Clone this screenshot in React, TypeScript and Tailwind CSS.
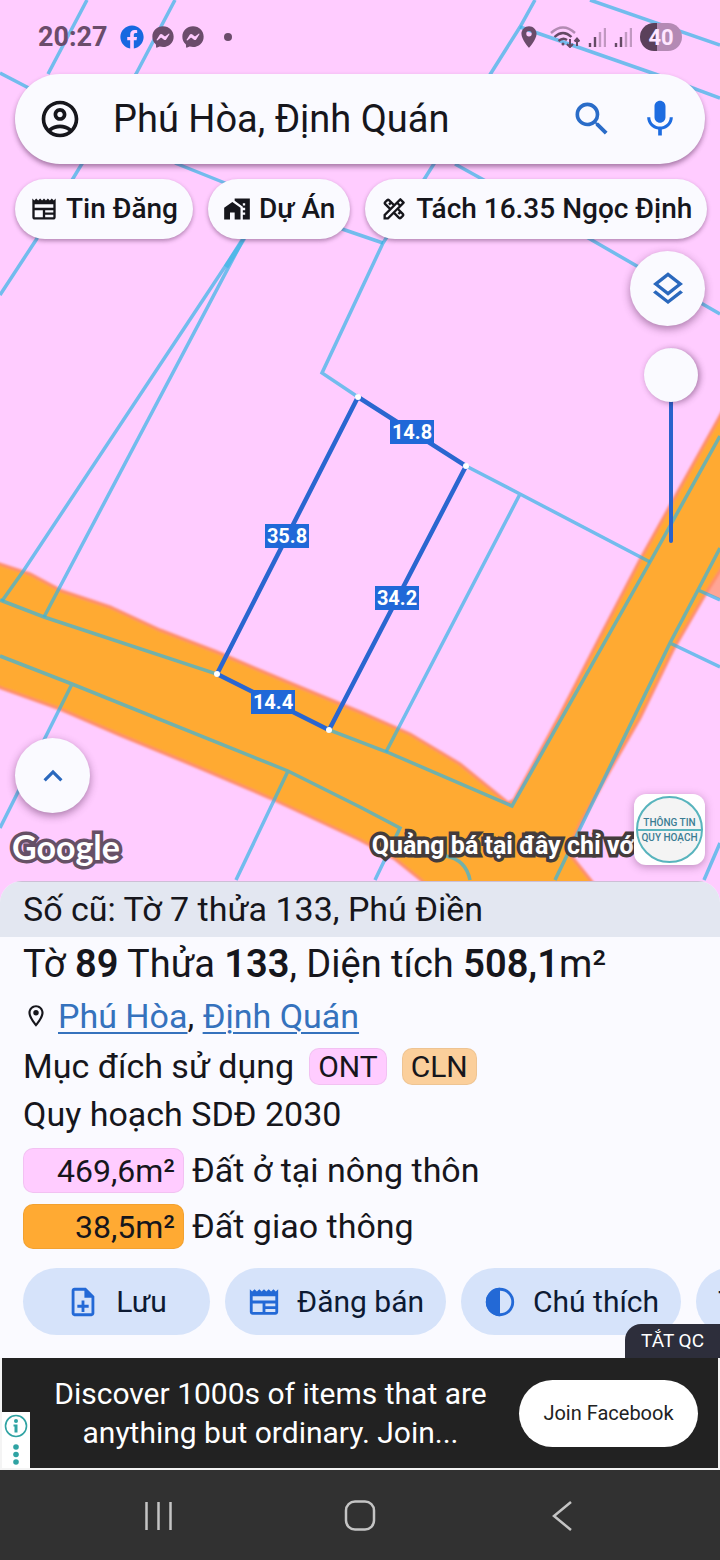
import type { ReactNode } from "react";
import { FaFacebook, FaFacebookMessenger } from "react-icons/fa";
import {
  MdHomeWork,
  MdKeyboardArrowUp,
  MdLocationOn,
  MdMic,
  MdNewspaper,
  MdOutlineAccountCircle,
  MdOutlineDesignServices,
  MdOutlineLayers,
  MdOutlineLocationOn,
  MdOutlineNoteAdd,
  MdSearch,
} from "react-icons/md";

const parcelLines = [
  "M87 0L48 74M0 73L48 98M175 0L136 74L36 240L0 295",
  "M175 163L235 187L345 230L383 243",
  "M535 0L520 27L425 178L383 243L322 373L358 397",
  "M520 27L655 74L720 98M590 0L720 45M455 164L590 239L720 314",
  "M244 238L24 570L2 601M244 238L44 617",
  "M0 600L44 617L217 674L329 730L387 752L512 806L650 562L720 436",
  "M466 466L520 494L650 562M520 494L386 752",
  "M0 656L72 684L288 771L360 807L400 828L375 880M72 684L0 828M288 771L236 880",
  "M446 856Q466 860 470 880",
  "M720 548L698 590L670 643L555 880M698 590L720 600M670 643L720 667M720 843L704 880",
];

const corners = [
  [358, 397],
  [466, 466],
  [329, 730],
  [217, 674],
];

const edges = [
  { x: 412, y: 432, label: "14.8" },
  { x: 287, y: 536, label: "35.8" },
  { x: 397, y: 598, label: "34.2" },
  { x: 273, y: 702, label: "14.4" },
];

const ParcelMap = () => (
  <svg
    className="absolute inset-x-0 top-0 h-[902px] w-full"
    viewBox="0 0 720 902"
    preserveAspectRatio="xMidYMin slice"
    aria-hidden="true"
  >
    <defs>
      <filter id="soft" x="-5%" y="-5%" width="110%" height="110%">
        <feGaussianBlur stdDeviation="1.2" />
      </filter>
    </defs>
    <rect width="720" height="902" fill="#ffccff" />
    <path d="M730 548L700 590L730 603Z" fill="#ffa596" />
    <path
      d="M-10 561L30 574L62 591L110 607L160 630L217 652L290 683L360 712L410 734L460 764L508 803L514 800L560 715L600 637L640 560L680 488L730 398V555L706 593L673 650L640 718L610 770L580 824L568 852L592 882L610 910H450L420 879L395 859L360 840L270 798L200 768L120 735L60 709L-10 684Z"
      fill="#ffaa33"
      stroke="#ff8d6b"
      strokeWidth="3"
      filter="url(#soft)"
    />
    {parcelLines.map((d) => (
      <path key={d} d={d} fill="none" stroke="#2fb4e4" strokeOpacity="0.68" strokeWidth="3.5" />
    ))}
    <path d="M244 238L226 267" fill="none" stroke="#2fb4e4" strokeOpacity="0.5" strokeWidth="5" />
    <path
      d="M358 397L466 466L329 730L217 674Z"
      fill="none"
      stroke="#2a66d0"
      strokeWidth="4.5"
    />
    {corners.map(([x, y]) => (
      <circle key={x} cx={x} cy={y} r="3" fill="#ffffff" />
    ))}
    {edges.map(({ x, y, label }) => (
      <g key={label}>
        <rect x={x - 22} y={y - 12} width="44" height="24" fill="#2068d8" />
        <text x={x} y={y + 7} textAnchor="middle" fill="#ffffff" className="text-[20px] font-bold">
          {label}
        </text>
      </g>
    ))}
  </svg>
);

const Signal = () => (
  <svg className="h-[20px] w-[18px]" viewBox="0 0 18 20" strokeWidth="2.4" stroke="#654a65" aria-hidden="true">
    <path d="M2 20v-4M7 20v-10" />
    <path d="M12 20V5M17 20V1" strokeOpacity="0.4" />
  </svg>
);

const StatusBar = () => (
  <div className="flex h-[74px] items-center justify-between px-[38px] text-[#6b4c6b]">
    <div className="flex items-center gap-2">
      <span className="mr-1 text-[27px] font-bold">20:27</span>
      <FaFacebook className="size-[24px] text-[#1768e0]" />
      <FaFacebookMessenger className="size-[22px]" />
      <FaFacebookMessenger className="size-[22px]" />
      <span className="ml-3 size-2 rounded-full bg-[#6b4c6b]" />
    </div>
    <div className="flex items-center gap-2">
      <MdLocationOn className="size-[26px]" />
      <svg className="h-[22px] w-[30px]" viewBox="0 0 30 22" fill="none" stroke="#654a65" strokeWidth="2.4" aria-hidden="true">
        <path d="M1 7Q13 -4 25 7" strokeOpacity="0.5" />
        <path d="M4.500 11Q13 3 21.500 11M8.500 15Q13 11 17 14" />
        <circle cx="13" cy="18" r="1.500" fill="#654a65" stroke="none" />
        <path d="M20 13v8M17 18l3 3l3-3M27 20v-7M24.500 15.500l2.500-3l2.500 3" strokeWidth="2" />
      </svg>
      <Signal />
      <Signal />
      <span className="flex h-[28px] w-[42px] items-center justify-center rounded-full bg-linear-to-r from-[#5a405a] from-40% to-[#b48ab4] to-40% text-[22px] font-bold text-[#ffe6ff]">
        40
      </span>
    </div>
  </div>
);

const SearchBar = () => (
  <div className="mx-[15px] flex h-[90px] items-center rounded-full bg-[#fafaff] px-[23px] shadow-[0_3px_5px_rgba(60,20,60,0.45)]">
    <button type="button" aria-label="Account" className="text-[#16161c]">
      <MdOutlineAccountCircle className="size-[44px]" />
    </button>
    <input
      type="text"
      aria-label="Search"
      defaultValue="Phú Hòa, Định Quán"
      className="ml-[31px] min-w-0 flex-1 bg-transparent text-[38px] text-[#16161c] outline-none"
    />
    <button type="button" aria-label="Find" className="text-[#2a6cc8]">
      <MdSearch className="size-[44px]" />
    </button>
    <button type="button" aria-label="Voice" className="ml-6 text-[#1d6ce0]">
      <MdMic className="size-[44px]" />
    </button>
  </div>
);

const Chip = ({ icon, children }: { icon: ReactNode; children: ReactNode }) => (
  <button
    type="button"
    className="flex h-[60px] shrink-0 items-center gap-2 rounded-full bg-[#fafaff] px-[15px] text-[28px] font-medium whitespace-nowrap text-[#16161c] shadow-[0_2px_4px_rgba(60,20,60,0.4)]"
  >
    {icon}
    {children}
  </button>
);

const roundButton =
  "flex size-[75px] items-center justify-center rounded-full bg-[#fafaff] text-[#2a68bd] shadow-[0_3px_8px_rgba(60,20,60,0.45)]";

const outlinedText = "[-webkit-text-stroke-width:7px] [paint-order:stroke_fill] [stroke-linejoin:round]";

const MapControls = () => (
  <>
    <div className="mt-3 mr-[15px] flex flex-col items-end gap-[22px]">
      <button type="button" aria-label="Layers" className={roundButton}>
        <MdOutlineLayers className="size-[40px]" />
      </button>
      <input
        type="range"
        aria-label="Opacity"
        defaultValue={0}
        className="mr-[7px] h-[195px] w-[54px] appearance-none bg-transparent [writing-mode:vertical-lr] [&::-webkit-slider-runnable-track]:mx-auto [&::-webkit-slider-runnable-track]:w-1 [&::-webkit-slider-runnable-track]:rounded-full [&::-webkit-slider-runnable-track]:bg-[#2a62cc] [&::-webkit-slider-thumb]:-ml-[25px] [&::-webkit-slider-thumb]:size-[54px] [&::-webkit-slider-thumb]:appearance-none [&::-webkit-slider-thumb]:rounded-full [&::-webkit-slider-thumb]:bg-[#fafaff] [&::-webkit-slider-thumb]:shadow-[2px_1px_6px_rgba(60,20,60,0.45)]"
      />
    </div>
    <div className="mt-auto flex items-end justify-between pr-[15px] pb-4">
      <div className="flex flex-col items-start gap-4">
        <button type="button" aria-label="Expand" className={`ml-[15px] ${roundButton}`}>
          <MdKeyboardArrowUp className="size-[38px]" />
        </button>
        <span
          className={`pl-3 font-[Lato] text-[34px] leading-[36px] font-bold text-white [-webkit-text-stroke-color:#665066] ${outlinedText}`}
        >
          Google
        </span>
      </div>
      <div className="flex items-end">
        <span
          className={`text-[25px] leading-[38px] font-bold whitespace-nowrap text-white [-webkit-text-stroke-color:#443c3c] ${outlinedText}`}
        >
          Quảng bá tại đây chỉ vớ
        </span>
        <div className="relative flex size-[71px] items-center justify-center rounded-xl bg-white shadow-[0_2px_8px_rgba(60,20,60,0.35)]">
          <div className="flex size-[67px] flex-col justify-center rounded-full border-2 border-[#58b4bd] bg-[#f4f4f4] text-center text-[10px] leading-[13px] font-medium whitespace-nowrap text-[#3b7d93]">
            <span className="border-b-2 border-[#58b4bd]">THÔNG TIN</span>
            <span>QUY HOẠCH</span>
          </div>
        </div>
      </div>
    </div>
  </>
);

const Tag = ({ className, children }: { className: string; children: ReactNode }) => (
  <span className={`flex h-[37px] items-center rounded-[10px] border border-black/5 px-2 text-[30px] ${className}`}>
    {children}
  </span>
);

const AreaRow = ({ area, label, className }: { area: string; label: string; className: string }) => (
  <div className="flex items-center gap-2">
    <span
      className={`flex h-[45px] w-[161px] items-center justify-end rounded-[10px] border border-black/5 px-2 text-[32px] ${className}`}
    >
      {area}
    </span>
    <span className="leading-[45px]">{label}</span>
  </div>
);

const Action = ({ icon, children }: { icon?: ReactNode; children: ReactNode }) => (
  <button
    type="button"
    className="flex h-[67px] min-w-[187px] shrink-0 items-center justify-center gap-4 rounded-full bg-[#d6e3fa] px-[22px] text-[30px] whitespace-nowrap text-[#0d1a33]"
  >
    {icon && <span className="text-[34px] text-[#2369d6]">{icon}</span>}
    {children}
  </button>
);

const HalfCircle = () => (
  <svg className="size-[34px]" viewBox="0 0 24 24" aria-hidden="true">
    <circle cx="12" cy="12" r="9" fill="none" stroke="currentColor" strokeWidth="2" />
    <path d="M12 2a10 10 0 0 0 0 20Z" fill="currentColor" />
  </svg>
);

const ParcelSheet = () => (
  <section className="relative overflow-hidden rounded-t-[22px] bg-[#fafaff] text-[34px] text-[#16161c]">
    <p className="h-[56px] border-t border-[#cdbfd6] bg-[#e3e7f1] px-[23px] leading-[54px]">
      Số cũ: Tờ 7 thửa 133, Phú Điền
    </p>
    <div className="px-[23px]">
      <h1 className="h-[54px] text-[38px] leading-[54px]">
        Tờ <b className="font-semibold">89</b> Thửa <b className="font-semibold">133</b>, Diện tích{" "}
        <b className="font-semibold">508,1</b>m²
      </h1>
      <p className="flex h-[50px] items-center">
        <MdOutlineLocationOn className="mr-[9px] size-[26px]" />
        <a href="#phu-hoa" className="text-[#3572bd] underline decoration-2 underline-offset-4">
          Phú Hòa
        </a>
        ,&nbsp;
        <a href="#dinh-quan" className="text-[#3572bd] underline decoration-2 underline-offset-4">
          Định Quán
        </a>
      </p>
      <div className="flex h-[50px] items-center gap-[15px]">
        <span>Mục đích sử dụng</span>
        <Tag className="bg-[#ffccff]">ONT</Tag>
        <Tag className="bg-[#fbcf9b]">CLN</Tag>
      </div>
      <p className="h-[48px] leading-[46px]">Quy hoạch SDĐ 2030</p>
      <div className="mt-[9px] flex flex-col gap-[11px]">
        <AreaRow area="469,6m²" label="Đất ở tại nông thôn" className="bg-[#ffccff]" />
        <AreaRow area="38,5m²" label="Đất giao thông" className="bg-[#ffaa33]" />
      </div>
    </div>
    <div className="mt-[19px] mb-[23px] flex gap-[15px] overflow-hidden pl-[23px]">
      <Action icon={<MdOutlineNoteAdd />}>Lưu</Action>
      <Action icon={<MdNewspaper />}>Đăng bán</Action>
      <Action icon={<HalfCircle />}>Chú thích</Action>
      <Action>Tách thửa đất</Action>
    </div>
    <button
      type="button"
      className="absolute right-0 bottom-0 h-[34px] rounded-tl-2xl bg-[#2d2e3b] px-4 text-[19px] leading-[34px] text-white"
    >
      TẮT QC
    </button>
  </section>
);

const AdBanner = () => (
  <aside className="border-x-2 border-b-2 border-[#f4f4f4] bg-[#f4f4f4]">
    <div className="relative flex h-[110px] items-center bg-[#222222] pr-[20px] pl-[44px]">
      <p className="flex-1 text-center text-[30px] leading-[39px] whitespace-nowrap text-white">
        Discover 1000s of items that are
        <br />
        anything but ordinary. Join...
      </p>
      <button type="button" className="ml-[24px] h-[67px] w-[179px] rounded-full bg-white text-[20px] text-[#222222]">
        Join Facebook
      </button>
      <div className="absolute bottom-0 left-0 flex h-[56px] w-[28px] justify-center bg-white">
        <svg className="h-[56px] w-[24px]" viewBox="0 0 24 56" fill="#2fa3a3" aria-hidden="true">
          <circle cx="12" cy="14" r="10.500" fill="none" stroke="#2fa3a3" strokeWidth="1.600" />
          <circle cx="12" cy="9" r="2" />
          <path d="M9.500 12.500h4v8h-3v-6h-1z" />
          <circle cx="12" cy="35" r="2.800" />
          <circle cx="12" cy="42.500" r="2.800" />
          <circle cx="12" cy="50" r="2.800" />
        </svg>
      </div>
    </div>
  </aside>
);

const NavBar = () => (
  <nav className="flex h-[90px] items-center bg-[#313131] px-[59px] text-[#c4c4c4]">
    <button type="button" aria-label="Recents" className="flex flex-1 justify-center">
      <svg className="size-[32px]" viewBox="0 0 32 32" stroke="currentColor" strokeWidth="2.500" aria-hidden="true">
        <path d="M3.500 3v28M15.500 3v28M27.500 3v28" />
      </svg>
    </button>
    <button type="button" aria-label="Home" className="flex flex-1 justify-center">
      <svg className="size-[32px]" viewBox="0 0 32 32" fill="none" stroke="currentColor" strokeWidth="2.500" aria-hidden="true">
        <rect x="2" y="2.500" width="28" height="28" rx="9" />
      </svg>
    </button>
    <button type="button" aria-label="Back" className="flex flex-1 justify-center">
      <svg className="size-[32px]" viewBox="0 0 32 32" fill="none" stroke="currentColor" strokeWidth="2.500" aria-hidden="true">
        <path d="M26 3L9 17L26 31" />
      </svg>
    </button>
  </nav>
);

export default function App() {
  return (
    <div className="flex min-h-screen flex-col overflow-hidden bg-[#ffccff] font-[Roboto,sans-serif]">
      <main className="relative flex flex-1 flex-col">
        <ParcelMap />
        <div className="relative flex flex-1 flex-col">
          <StatusBar />
          <SearchBar />
          <div className="mt-[15px] flex gap-[15px] px-[15px]">
            <Chip icon={<MdNewspaper className="size-[28px]" />}>Tin Đăng</Chip>
            <Chip icon={<MdHomeWork className="size-[28px]" />}>Dự Án</Chip>
            <Chip icon={<MdOutlineDesignServices className="size-[28px]" />}>Tách 16.35 Ngọc Định</Chip>
          </div>
          <MapControls />
        </div>
      </main>
      <ParcelSheet />
      <AdBanner />
      <NavBar />
    </div>
  );
}
